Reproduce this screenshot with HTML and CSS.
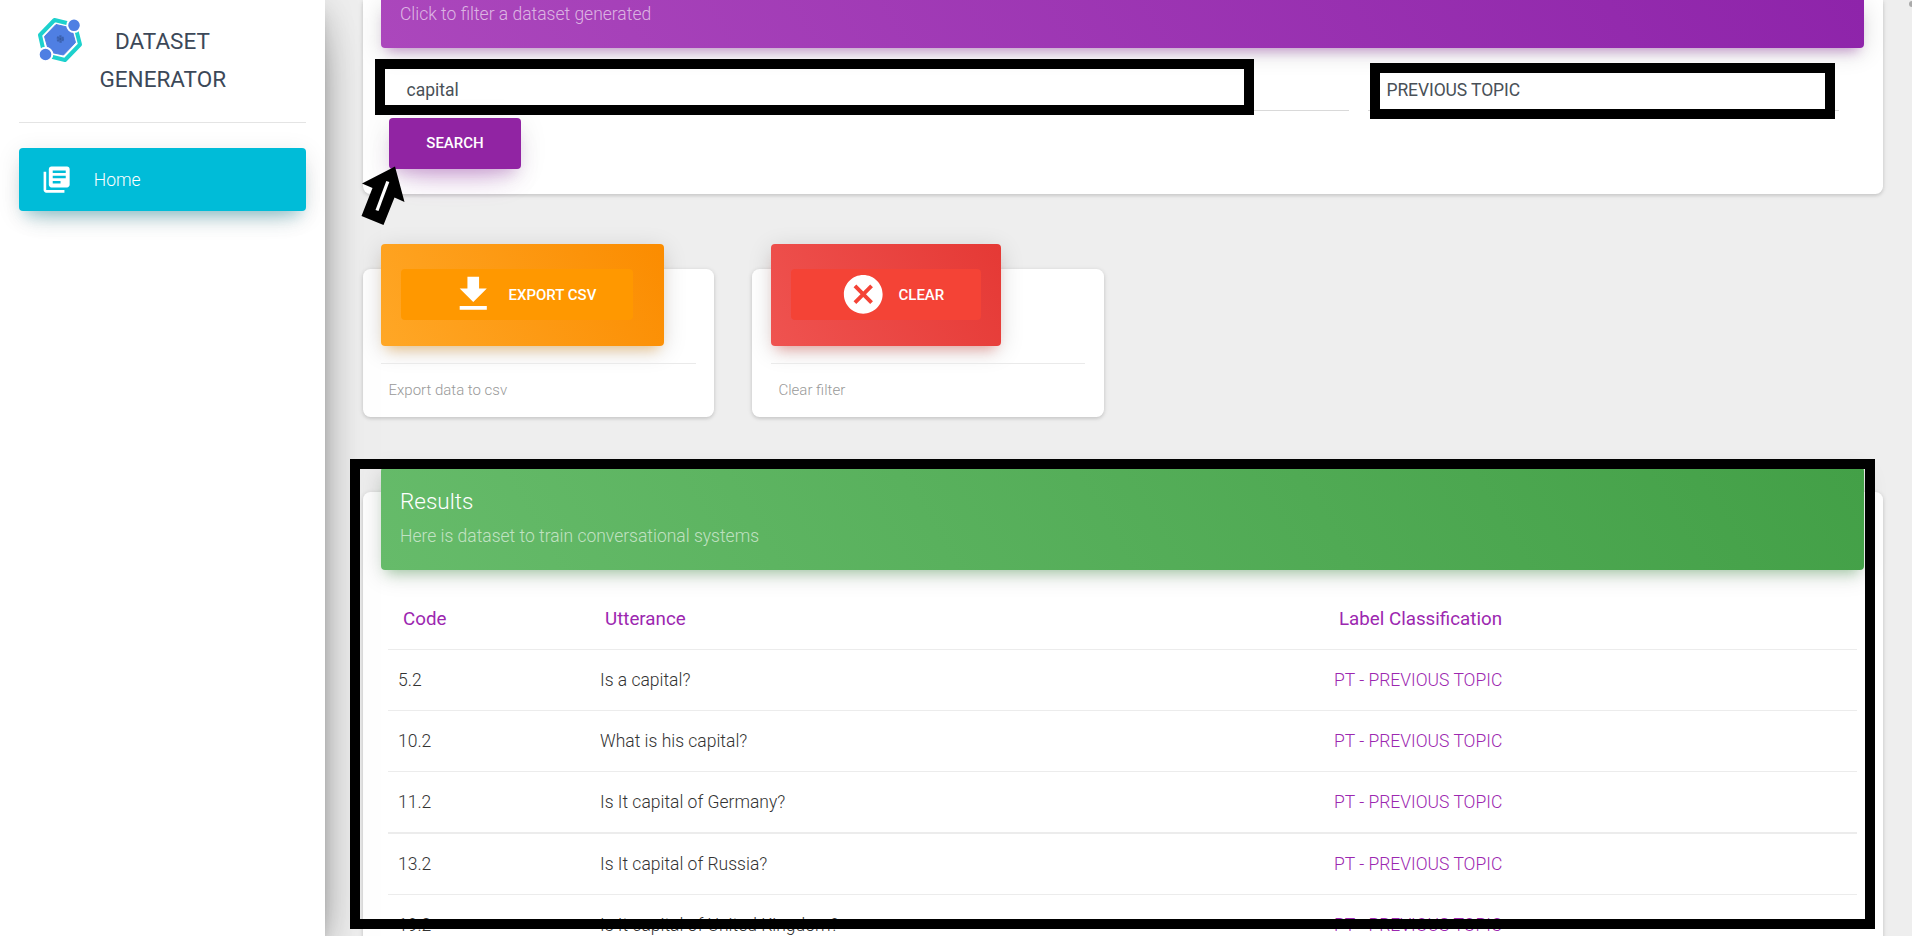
FILE: index.html
```html
<!DOCTYPE html>
<html lang="en">
<head>
<meta charset="utf-8">
<title>Dataset Generator</title>
<link rel="stylesheet" href="styles.css">
</head>
<body>
<div class="app">
  <aside class="sidebar">
    <div class="brand">
      <svg class="brand-logo" viewBox="0 0 44 44" width="44" height="44">
        <polygon points="16.5,2 37,7 42,26.5 27,42 6.5,37 2,17" fill="none" stroke="#1dd1cd" stroke-width="4" stroke-linejoin="round"/>
        <polygon points="18,6.5 33.500,10 37.500,24.500 25.500,37 11,34 6.500,18.500" fill="#4f7fe3" stroke="#4f7fe3" stroke-linejoin="round"/>
        <circle cx="36" cy="7.300" r="6.800" fill="#4f7fe3" stroke="#fff" stroke-width="2"/>
        <circle cx="7.500" cy="36.500" r="6.800" fill="#4f7fe3" stroke="#fff" stroke-width="2"/>
        <circle cx="22.300" cy="21" r="2.800" fill="#4169bd" stroke="#3b62b0" stroke-width="2" stroke-dasharray="2 1"/>
        <circle cx="22.300" cy="21" r="1" fill="#36589f"/>
      </svg>
      <span class="brand-name">DATASET<br>GENERATOR</span>
    </div>
    <a class="nav-item">
      <svg viewBox="0 0 24 24" width="31.25" height="31.25" fill="#fff"><path d="M4 6H2v14c0 1.100.9 2 2 2h14v-2H4V6zm16-4H8c-1.100 0-2 .9-2 2v12c0 1.100.9 2 2 2h12c1.100 0 2-.9 2-2V4c0-1.100-.9-2-2-2zm-1 9H9V9h10v2zm-4 4H9v-2h6v2zm4-8H9V5h10v2z"/></svg>
      <span>Home</span>
    </a>
  </aside>

  <main class="main">
    <section class="card filter-card">
      <header class="card-header purple"><p class="subtitle">Click to filter a dataset generated</p></header>
      <div class="filter-row">
        <div class="field field-text">capital</div>
        <div class="field field-topic">PREVIOUS TOPIC</div>
      </div>
      <button class="btn btn-search">SEARCH</button>
    </section>

    <div class="actions">
      <section class="card action-card">
        <header class="card-header orange">
          <button class="btn btn-icon btn-orange">
            <svg viewBox="0 0 24 24" width="46.500" height="46.500" fill="#fff"><path d="M19 9h-4V3H9v6H5l7 7 7-7zM5 18v2h14v-2H5z"/></svg>
            <span>EXPORT CSV</span>
          </button>
        </header>
        <footer class="card-footer">Export data to csv</footer>
      </section>
      <section class="card action-card clear-card">
        <header class="card-header red">
          <button class="btn btn-icon btn-red">
            <svg viewBox="0 0 24 24" width="46.500" height="46.500" fill="#fff"><path d="M12 2C6.470 2 2 6.470 2 12s4.470 10 10 10 10-4.470 10-10S17.530 2 12 2zm5 13.590L15.590 17 12 13.410 8.410 17 7 15.590 10.590 12 7 8.410 8.410 7 12 10.590 15.590 7 17 8.410 13.410 12 17 15.590z"/></svg>
            <span>CLEAR</span>
          </button>
        </header>
        <footer class="card-footer">Clear filter</footer>
      </section>
    </div>

    <section class="card results-card">
      <header class="card-header green">
        <h4 class="title">Results</h4>
        <p class="subtitle">Here is dataset to train conversational systems</p>
      </header>
      <div class="table">
        <div class="row head"><span>Code</span><span>Utterance</span><span>Label Classification</span></div>
        <div class="row"><span>5.2</span><span>Is a capital?</span><span class="label">PT - PREVIOUS TOPIC</span></div>
        <div class="row"><span>10.2</span><span>What is his capital?</span><span class="label">PT - PREVIOUS TOPIC</span></div>
        <div class="row"><span>11.2</span><span>Is It capital of Germany?</span><span class="label">PT - PREVIOUS TOPIC</span></div>
        <div class="row thick"><span>13.2</span><span>Is It capital of Russia?</span><span class="label">PT - PREVIOUS TOPIC</span></div>
        <div class="row"><span>19.2</span><span>Is It capital of United Kingdom?</span><span class="label">PT - PREVIOUS TOPIC</span></div>
      </div>
    </section>
  </main>

  <!-- Highlight marks drawn over the page -->
  <div class="mark mark-text"></div>
  <div class="mark mark-topic"></div>
  <div class="mark mark-results"></div>
  <svg class="pointer" viewBox="0 0 44 60" width="44" height="60">
    <polygon points="34,0.500 43.500,36 33.500,31.500 22.500,59 0.500,50 11.500,22 1,17.500" fill="#000"/>
    <path d="M26.800 15.500L16 44.500" stroke="#fff" stroke-width="3.200" fill="none"/>
  </svg>
  <div class="scroll-dot"></div>
</div>
</body>
</html>
```
FILE: styles.css
```css
* { box-sizing: border-box; }
body {
  margin: 0;
  background: #eee;
  color: #3c4858;
  font-family: Roboto, "Liberation Sans", sans-serif;
  font-size: 17.5px;
  font-weight: 300;
}
p, h4 { margin: 0; font-weight: 300; }
.app { position: relative; display: flex; width: 1912px; height: 936px; overflow: hidden; }

.sidebar {
  position: relative;
  z-index: 2;
  width: 325px;
  flex: none;
  padding: 0 19px;
  background: #fff;
  box-shadow: 0 20px 47.5px -15px rgba(0,0,0,.56), 0 5px 31px 0 rgba(0,0,0,.12), 0 10px 12.5px -6px rgba(0,0,0,.2);
}
.brand { display: flex; height: 123px; padding: 18px 0 0 19px; border-bottom: 1px solid #e4e4e4; }
.brand-logo { flex: none; overflow: visible; }
.brand-name { width: 126px; margin: 5px 0 0 17.5px; font-size: 22.5px; font-weight: 400; line-height: 37.5px; text-align: center; }
.nav-item {
  display: flex;
  align-items: center;
  gap: 22px;
  height: 63px;
  margin-top: 25px;
  padding-left: 21.5px;
  border-radius: 4px;
  background: #00bcd8;
  color: #fff;
  box-shadow: 0 15px 25px -12px rgba(0,100,115,.3), 0 5px 25px 0 rgba(0,0,0,.1), 0 10px 12px -6px rgba(0,172,193,.2);
}

.main { flex: 1; display: flex; flex-direction: column; padding: 0 29px 0 38px; }
.card { background: #fff; border-radius: 7.5px; box-shadow: 0 1px 5px 0 rgba(0,0,0,.14), 0 2px 3px rgba(0,0,0,.06); }
.card-header { border-radius: 4px; color: #fff; }
.subtitle { color: rgba(255,255,255,.62); line-height: 26px; }
.title { font-size: 22.5px; line-height: 32px; }

.filter-card { flex: none; height: 194px; border-top-left-radius: 0; border-top-right-radius: 0; }
.filter-card .card-header { height: 48px; margin: 0 19px 0 18px; padding: 1px 19px; border-radius: 0 0 4px 4px; }
.purple { background: linear-gradient(60deg, #ab47bc, #8e24aa); box-shadow: 0 5px 25px 0 rgba(0,0,0,.14), 0 9px 12px -6px rgba(156,39,176,.4); }
.orange { background: linear-gradient(60deg, #ffa726, #fb8c00); box-shadow: 0 5px 25px 0 rgba(0,0,0,.14), 0 9px 12px -6px rgba(255,152,0,.4); }
.red { background: linear-gradient(60deg, #ef5350, #e53935); box-shadow: 0 5px 25px 0 rgba(0,0,0,.14), 0 9px 12px -6px rgba(244,67,54,.4); }
.green { background: linear-gradient(60deg, #66bb6a, #43a047); box-shadow: 0 5px 25px 0 rgba(0,0,0,.14), 0 9px 12px -6px rgba(76,175,80,.4); }

.filter-row { display: flex; gap: 19px; padding: 18px 44px 0 26px; }
.field { height: 45px; border-bottom: 1px solid #d9d9d9; color: #495057; font-weight: 400; line-height: 48px; }
.field-text { width: 960px; padding-left: 17.5px; }
.field-topic { flex: 1; padding-left: 18.5px; letter-spacing: -.1px; }

.btn { display: flex; align-items: center; height: 51px; border: 0; border-radius: 4px; color: #fff; font: 500 15px Roboto, "Liberation Sans", sans-serif; white-space: nowrap; }
.btn-search { justify-content: center; width: 132px; margin: 7px 0 0 26px; padding-bottom: 2px; background: #9124a3; box-shadow: 0 17px 32px -15px rgba(156,39,176,.42), 0 5px 28px 0 rgba(0,0,0,.1), 0 10px 12px -6px rgba(156,39,176,.2); }

.actions { display: flex; gap: 38px; margin-top: 75px; }
.action-card { width: 351px; height: 148px; padding: 0 18px; }
.clear-card { width: 352px; padding: 0 19px; }
.action-card .card-header { height: 102px; margin-top: -25px; padding: 25px 20px; }
.action-card .orange { width: 283px; }
.action-card .red { width: 230px; }
.btn-icon { padding: 0 0 0 49px; }
.btn-icon svg { flex: none; margin-right: 12px; }
.btn-orange { width: 232px; background: #ff9800; }
.btn-red { width: 190px; background: #f44336; }
.card-footer { margin-top: 17px; padding: 17px 7.5px 0; border-top: 1px solid #eaeaea; color: #999; font-size: 15px; line-height: 19px; }

.results-card { flex: none; height: 500px; margin-top: 75px; }
.results-card .card-header { height: 103px; margin: -25px 19px 0 18px; padding: 18px 19px; }
.results-card .title { margin-bottom: 6px; }
.table { margin: 21px 26px 0 25px; }
.row { display: grid; grid-template-columns: 202px 734px 1fr; height: 61px; padding-left: 10px; border-top: 1px solid #ececec; line-height: 61px; color: #333; }
.row.head { height: 58px; padding-left: 15px; border: 0; color: #9c27b0; font-size: 18.75px; font-weight: 400; line-height: 56px; }
.row.thick { height: 62px; border-top-width: 2px; }
.row .label { color: #9c27b0; }

.mark { position: absolute; z-index: 3; border: 10px solid #000; }
.mark-text { left: 375px; top: 59px; width: 879px; height: 56px; }
.mark-topic { left: 1370px; top: 63px; width: 465px; height: 56px; }
.mark-results { left: 350px; top: 459px; width: 1525px; height: 470px; }
.pointer { position: absolute; z-index: 3; left: 361px; top: 166px; }
.scroll-dot { position: absolute; left: 1909px; top: 1px; width: 6px; height: 6px; border-radius: 50%; background: #aaa; }
```
